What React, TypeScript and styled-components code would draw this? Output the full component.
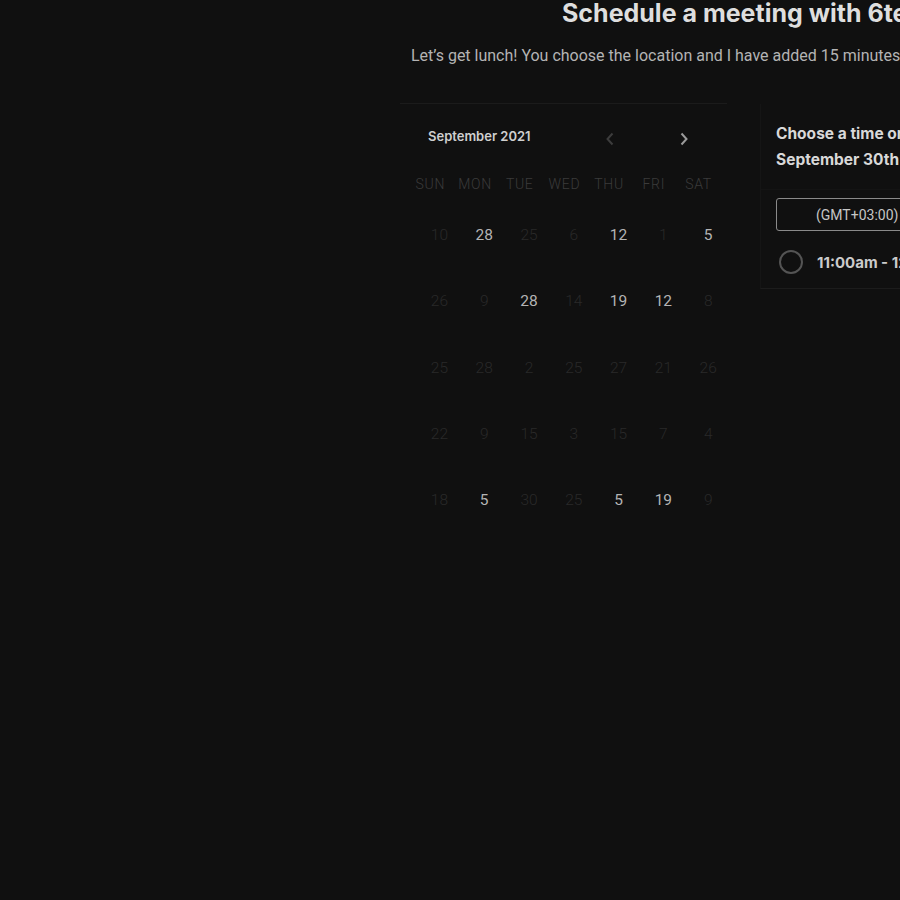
import React from "react";
import styled, { createGlobalStyle } from "styled-components";

const Global = createGlobalStyle`
  html, body { margin: 0; padding: 0; background: #101010; overflow: hidden; }
  body { width: 900px; height: 900px; font-family: Roboto, "Noto Sans", sans-serif; }
`;

const Page = styled.div`
  margin-left: 400px;
  width: 760px;
  height: 900px;
  background: #101010;
`;

const Header = styled.header`
  display: flex;
  flex-direction: column;
`;

const Title = styled.h1`
  margin: 0;
  padding-left: 162px;
  font-family: Inter, "Noto Sans", sans-serif;
  font-weight: 700;
  font-size: 25px;
  line-height: 26px;
  color: #dedede;
  white-space: nowrap;
`;

const Subtitle = styled.p`
  margin: 20px 0 0;
  padding-left: 11px;
  font-family: Roboto, sans-serif;
  font-weight: 400;
  font-size: 16px;
  line-height: 20px;
  color: #b4b4b4;
  white-space: nowrap;
`;

const Main = styled.div`
  display: flex;
  margin-top: 37px;
  gap: 33px;
  align-items: flex-start;
`;

const Calendar = styled.section`
  width: 327px;
  flex: none;
  border-top: 1px solid #1b1b1b;
`;

const MonthBar = styled.div`
  display: flex;
  align-items: center;
  gap: 54px;
  height: 34px;
  margin-top: 15px;
  padding-left: 28px;
`;

const Month = styled.span`
  flex: none;
  width: 118px;
  font-family: Inter, sans-serif;
  font-weight: 600;
  font-size: 13px;
  color: #cfcfcf;
  white-space: nowrap;
`;

const Arrow = styled.button<{ $active?: boolean }>`
  flex: none;
  background: none;
  border: 0;
  padding: 0;
  margin: 6px 0 0;
  width: 20px;
  height: 20px;
  display: flex;
  align-items: center;
  justify-content: center;
  color: ${(p) => (p.$active ? "#9a9a9a" : "#3c3c3c")};
`;

const Weekdays = styled.div`
  display: grid;
  grid-template-columns: repeat(7, 44.7px);
  margin-top: 21px;
  padding-left: 8px;
`;

const Weekday = styled.span`
  text-align: center;
  font-family: Roboto, sans-serif;
  font-weight: 300;
  font-size: 14px;
  letter-spacing: 0.7px;
  line-height: 20px;
  color: #3b3b3b;
`;

const Days = styled.div`
  display: grid;
  grid-template-columns: repeat(7, 44.8px);
  grid-auto-rows: 66.3px;
  padding-left: 17px;
  margin-top: 31px;
`;

const Day = styled.span<{ $on?: boolean }>`
  text-align: center;
  font-family: Roboto, sans-serif;
  font-weight: ${(p) => (p.$on ? 400 : 300)};
  font-size: 15.5px;
  line-height: 20px;
  color: ${(p) => (p.$on ? "#b4b4b4" : "#292929")};
`;

const Slots = styled.section`
  width: 300px;
  flex: none;
  border-left: 1px solid #151515;
  border-bottom: 1px solid #1c1c1c;
  margin-top: 1px;
`;

const SlotsTitle = styled.h2`
  margin: 0;
  padding: 17px 0 16px 15px;
  font-family: Inter, sans-serif;
  font-weight: 700;
  font-size: 15.5px;
  line-height: 26px;
  color: #d8d8d8;
  white-space: nowrap;
  border-bottom: 1px solid #141414;
`;

const SlotsBody = styled.div`
  padding: 8px 0 0 15px;
`;

const Zone = styled.div`
  height: 31px;
  border: 1px solid #8a8a8a;
  border-radius: 3px;
  display: flex;
  align-items: center;
  padding-left: 39px;
  font-family: Roboto, sans-serif;
  font-size: 14px;
  color: #c6c6c6;
  white-space: nowrap;
`;

const Slot = styled.label`
  display: flex;
  align-items: center;
  gap: 14px;
  box-sizing: border-box;
  height: 57px;
  padding: 5px 0 0 3px;
  font-family: Inter, sans-serif;
  font-weight: 700;
  font-size: 15px;
  color: #cbcbcb;
  white-space: nowrap;
`;

const Radio = styled.span`
  width: 20px;
  height: 20px;
  border-radius: 50%;
  border: 2px solid #545454;
  flex: none;
`;

const Chevron = ({ dir }: { dir: "left" | "right" }) => (
  <svg width="10" height="14" viewBox="0 0 10 14" fill="none">
    <path
      d={dir === "left" ? "M7.5 1.5 L2.5 7 L7.5 12.5" : "M2.5 1.5 L7.5 7 L2.5 12.5"}
      stroke="currentColor"
      strokeWidth="2"
    />
  </svg>
);

const weekdays = ["SUN", "MON", "TUE", "WED", "THU", "FRI", "SAT"];
const days: [string, boolean][] = [
  ["10", false], ["28", true], ["25", false], ["6", false], ["12", true], ["1", false], ["5", true],
  ["26", false], ["9", false], ["28", true], ["14", false], ["19", true], ["12", true], ["8", false],
  ["25", false], ["28", false], ["2", false], ["25", false], ["27", false], ["21", false], ["26", false],
  ["22", false], ["9", false], ["15", false], ["3", false], ["15", false], ["7", false], ["4", false],
  ["18", false], ["5", true], ["30", false], ["25", false], ["5", true], ["19", true], ["9", false],
];

export default function App() {
  return (
    <>
      <Global />
      <Page>
        <Header>
          <Title>Schedule a meeting with 6tems</Title>
          <Subtitle>
            Let’s get lunch! You choose the location and I have added 15 minutes of travel time.
          </Subtitle>
        </Header>
        <Main>
          <Calendar>
            <MonthBar>
              <Month>September 2021</Month>
              <Arrow aria-label="Previous month">
                <Chevron dir="left" />
              </Arrow>
              <Arrow $active aria-label="Next month">
                <Chevron dir="right" />
              </Arrow>
            </MonthBar>
            <Weekdays>
              {weekdays.map((w) => (
                <Weekday key={w}>{w}</Weekday>
              ))}
            </Weekdays>
            <Days>
              {days.map(([d, on], i) => (
                <Day key={i} $on={on}>
                  {d}
                </Day>
              ))}
            </Days>
          </Calendar>
          <Slots>
            <SlotsTitle>
              Choose a time on Thursday,
              <br />
              September 30th
            </SlotsTitle>
            <SlotsBody>
              <Zone>(GMT+03:00) Istanbul</Zone>
              <Slot>
                <Radio />
                11:00am - 12:00pm
              </Slot>
            </SlotsBody>
          </Slots>
        </Main>
      </Page>
    </>
  );
}
